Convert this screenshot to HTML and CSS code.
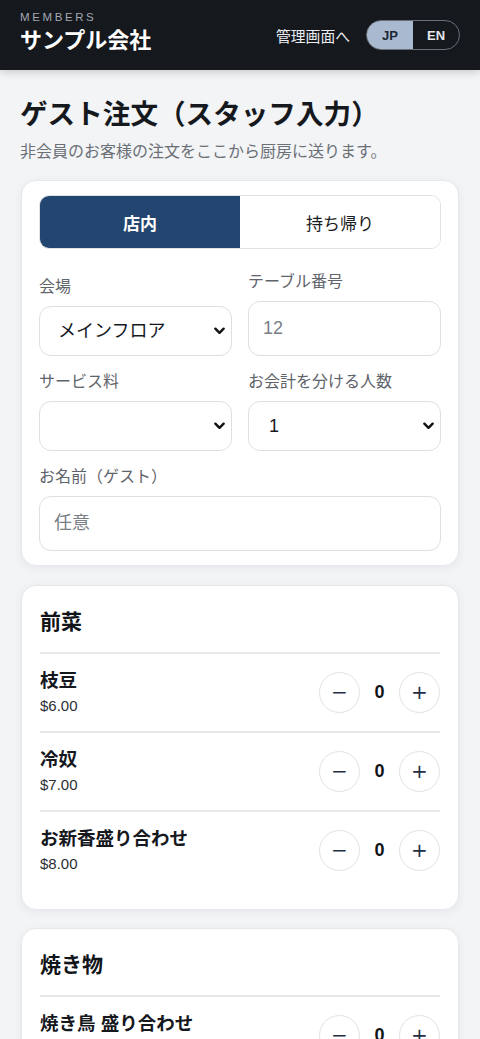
FILE: index.html
```html
<!DOCTYPE html>
<html lang="ja">
<head>
<meta charset="utf-8">
<title>ゲスト注文</title>
<link rel="stylesheet" href="styles.css">
</head>
<body>
<header class="topbar">
  <div class="brand">
    <div class="brand-kicker">MEMBERS</div>
    <div class="brand-name">サンプル会社</div>
  </div>
  <nav class="topnav">
    <a class="admin-link" href="#">管理画面へ</a>
    <div class="lang">
      <span class="lang-opt active">JP</span>
      <span class="lang-opt">EN</span>
    </div>
  </nav>
</header>

<main class="page">
  <h1 class="title">ゲスト注文（スタッフ入力）</h1>
  <p class="subtitle">非会員のお客様の注文をここから厨房に送ります。</p>

  <section class="card form-card">
    <div class="seg">
      <button class="seg-btn active">店内</button>
      <button class="seg-btn">持ち帰り</button>
    </div>
    <div class="grid">
      <label class="field">
        <span class="label">会場</span>
        <select class="control select"><option>メインフロア</option></select>
      </label>
      <label class="field">
        <span class="label">テーブル番号</span>
        <input class="control input" placeholder="12">
      </label>
      <label class="field">
        <span class="label">サービス料</span>
        <select class="control select"><option></option></select>
      </label>
      <label class="field">
        <span class="label">お会計を分ける人数</span>
        <select class="control select num"><option>1</option></select>
      </label>
      <label class="field wide">
        <span class="label">お名前（ゲスト）</span>
        <input class="control input" placeholder="任意">
      </label>
    </div>
  </section>

  <section class="card menu-card">
    <h2 class="cat">前菜</h2>
    <div class="item">
      <div class="item-info"><div class="item-name">枝豆</div><div class="item-price">$6.00</div></div>
      <div class="stepper"><button class="step">−</button><span class="qty">0</span><button class="step">+</button></div>
    </div>
    <div class="item">
      <div class="item-info"><div class="item-name">冷奴</div><div class="item-price">$7.00</div></div>
      <div class="stepper"><button class="step">−</button><span class="qty">0</span><button class="step">+</button></div>
    </div>
    <div class="item">
      <div class="item-info"><div class="item-name">お新香盛り合わせ</div><div class="item-price">$8.00</div></div>
      <div class="stepper"><button class="step">−</button><span class="qty">0</span><button class="step">+</button></div>
    </div>
  </section>

  <section class="card menu-card">
    <h2 class="cat">焼き物</h2>
    <div class="item">
      <div class="item-info"><div class="item-name">焼き鳥 盛り合わせ</div><div class="item-price">$12.00</div></div>
      <div class="stepper"><button class="step">−</button><span class="qty">0</span><button class="step">+</button></div>
    </div>
    <div class="item">
      <div class="item-info"><div class="item-name">つくね</div><div class="item-price">$5.00</div></div>
      <div class="stepper"><button class="step">−</button><span class="qty">0</span><button class="step">+</button></div>
    </div>
  </section>
</main>
</body>
</html>
```

FILE: styles.css
```css
* { box-sizing: border-box; }
html, body { margin: 0; padding: 0; }
body {
  background: #f3f4f6;
  font-family: "Liberation Sans", "Noto Sans CJK JP", sans-serif;
  color: #111418;
}
.topbar {
  height: 70px;
  background: #15181d;
  display: flex;
  align-items: center;
  justify-content: space-between;
  padding: 0 20px;
  box-shadow: 0 2px 8px rgba(0,0,0,0.18);
  position: relative;
}
.brand { padding-bottom: 7px; }
.brand-kicker {
  font-size: 11.5px;
  letter-spacing: 2.6px;
  color: #a3a8b1;
  line-height: 14px;
  margin-bottom: 4px;
}
.brand-name {
  font-size: 22px;
  font-weight: 700;
  color: #ffffff;
  line-height: 26px;
}
.topnav { display: flex; align-items: center; gap: 16px; }
.admin-link {
  color: #eceef1;
  font-size: 14.8px;
  text-decoration: none;
}
.lang {
  display: flex;
  border: 1px solid #6b7078;
  border-radius: 16px;
  overflow: hidden;
  height: 30px;
}
.lang-opt {
  width: 46px;
  display: flex;
  align-items: center;
  justify-content: center;
  font-size: 13px;
  font-weight: 700;
  color: #e4e6ea;
}
.lang-opt.active { background: #a9bad0; color: #1b2636; }

.page { padding: 27px 20px 20px; }
.title {
  margin: 0;
  font-size: 27.6px;
  line-height: 36px;
  font-weight: 700;
  color: #15181d;
}
.subtitle {
  margin: 7px 0 0;
  font-size: 16px;
  color: #6b7077;
  line-height: 24px;
}
.card {
  background: #ffffff;
  border: 1px solid #e6e8eb;
  border-radius: 15px;
  box-shadow: 0 2px 10px rgba(17,24,39,0.06);
  margin: 0 1px;
}
.form-card { margin-top: 16px; padding: 14px 17px 14px; }
.seg {
  display: flex;
  border: 1px solid #dfe2e6;
  border-radius: 10px;
  overflow: hidden;
  height: 54px;
}
.seg-btn {
  flex: 1;
  border: none;
  background: #ffffff;
  font-family: inherit;
  font-size: 17px;
  color: #1a1d22;
  padding: 0;
}
.seg-btn.active { background: #234670; color: #ffffff; font-weight: 700; }

.grid {
  display: grid;
  grid-template-columns: 1fr 1fr;
  column-gap: 16px;
  row-gap: 15px;
  align-items: end;
  margin-top: 22px;
}
.field { display: flex; flex-direction: column; }
.field.wide { grid-column: 1 / -1; }
.label {
  font-size: 16px;
  color: #5f646b;
  line-height: 22px;
  margin-bottom: 8px;
}
.control {
  border: 1px solid #dcdfe3;
  border-radius: 12px;
  background: #ffffff;
  font-family: inherit;
  font-size: 18px;
  color: #15181d;
  width: 100%;
}
.input { height: 55px; padding: 0 14px; }
.input::placeholder { color: #7a7f86; }
.select {
  height: 50px;
  padding: 0 12px 0 18px;
  appearance: none;
  -webkit-appearance: none;
  background-image: url("data:image/svg+xml;utf8,<svg xmlns='http://www.w3.org/2000/svg' width='12' height='8' viewBox='0 0 12 8'><path d='M1.5 1.5 L6 6 L10.5 1.5' fill='none' stroke='%23111' stroke-width='2.6' stroke-linecap='round' stroke-linejoin='round'/></svg>");
  background-repeat: no-repeat;
  background-position: right 6px center;
  background-size: 11px 8px;
}
.select.num { padding-left: 20px; }

.menu-card { margin-top: 19px; padding: 21px 18px 19px; }
.menu-card + .menu-card { margin-top: 18px; }
.cat {
  margin: 0;
  font-size: 21px;
  line-height: 30px;
  font-weight: 700;
  padding-bottom: 15px;
  border-bottom: 2px solid #e6e8eb;
}
.item {
  display: flex;
  align-items: center;
  justify-content: space-between;
  padding: 14px 0 15px;
  border-bottom: 2px solid #e6e8eb;
}
.item:last-child { border-bottom: none; padding-bottom: 16px; }
.item-name {
  font-size: 18.5px;
  font-weight: 700;
  line-height: 26px;
  color: #15181d;
}
.item-price {
  font-size: 15px;
  color: #2b2f35;
  line-height: 20px;
  margin-top: 2px;
}
.stepper { display: flex; align-items: center; }
.step {
  width: 41px;
  height: 41px;
  border-radius: 50%;
  border: 1px solid #dfe2e6;
  background: #ffffff;
  font-family: "DejaVu Sans", sans-serif;
  font-size: 20px;
  color: #1f2f45;
  display: flex;
  align-items: center;
  justify-content: center;
  padding: 0;
}
.qty {
  width: 39px;
  text-align: center;
  font-size: 18px;
  font-weight: 700;
}
```
